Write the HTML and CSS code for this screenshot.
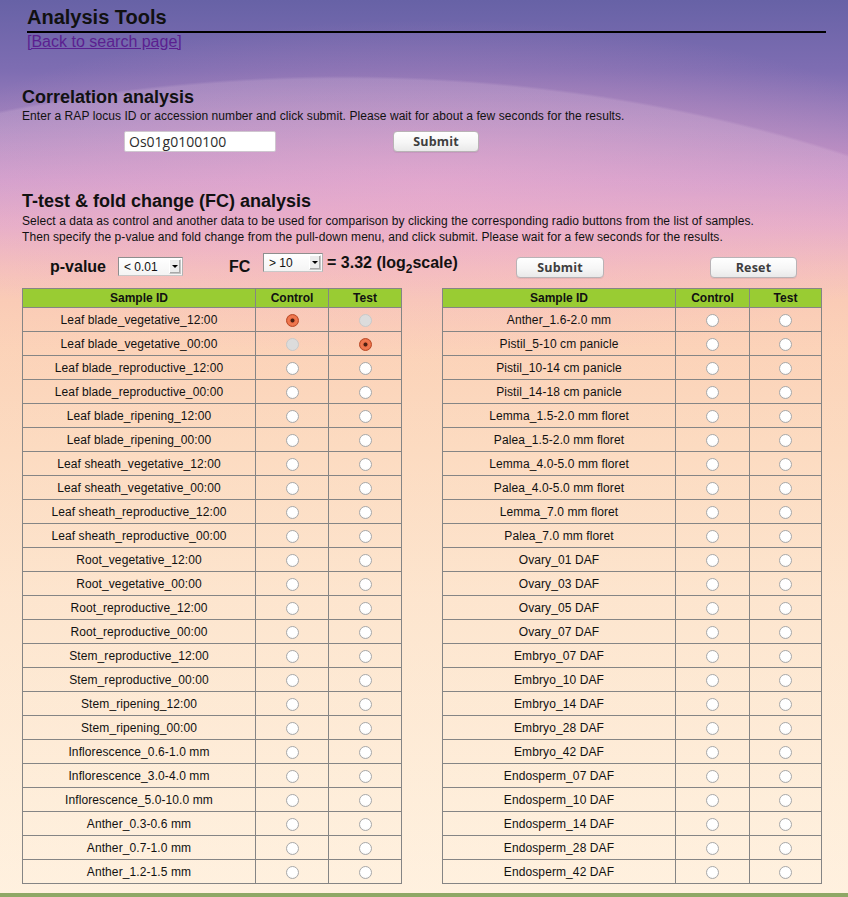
FILE: index.html
```html
<!DOCTYPE html>
<html lang="en">
<head>
<meta charset="utf-8">
<title>Analysis Tools</title>
<link rel="stylesheet" href="styles.css">
</head>
<body>
<div class="page">
  <header class="top">
    <h1 class="title">Analysis Tools</h1>
    <a class="back" href="#">[Back to search page]</a>
  </header>

  <section class="corr">
    <h2 class="sec-title">Correlation analysis</h2>
    <p class="desc">Enter a RAP locus ID or accession number and click submit. Please wait for about a few seconds for the results.</p>
    <form class="corr-form">
      <input class="locus" type="text" value="Os01g0100100">
      <button class="btn btn-corr" type="button">Submit</button>
    </form>
  </section>

  <section class="ttest">
    <h2 class="sec-title sec-ttest">T-test &amp; fold change (FC) analysis</h2>
    <p class="desc">Select a data as control and another data to be used for comparison by clicking the corresponding radio buttons from the list of samples.<br>Then specify the p-value and fold change from the pull-down menu, and click submit. Please wait for a few seconds for the results.</p>

    <div class="params">
      <span class="lbl lbl-p">p-value</span>
      <span class="sel sel-p"><select><option>&lt; 0.01</option></select><span class="arrow"></span></span>
      <span class="lbl lbl-fc">FC</span>
      <span class="sel sel-fc"><select><option>&gt; 10</option></select><span class="arrow"></span></span>
      <span class="log">= 3.32 (log<sub>2</sub>scale)</span>
      <button class="btn btn-submit" type="button">Submit</button>
      <button class="btn btn-reset" type="button">Reset</button>
    </div>

    <div class="tables">
      <table class="samples">
        <colgroup><col class="c-id"><col class="c-ctl"><col class="c-test"></colgroup>
        <thead><tr><th>Sample ID</th><th>Control</th><th>Test</th></tr></thead>
        <tbody>
          <tr><td>Leaf blade_vegetative_12:00</td><td><input type="radio" name="c" checked></td><td><input type="radio" name="t" disabled></td></tr>
          <tr><td>Leaf blade_vegetative_00:00</td><td><input type="radio" name="c" disabled></td><td><input type="radio" name="t" checked></td></tr>
          <tr><td>Leaf blade_reproductive_12:00</td><td><input type="radio" name="c"></td><td><input type="radio" name="t"></td></tr>
          <tr><td>Leaf blade_reproductive_00:00</td><td><input type="radio" name="c"></td><td><input type="radio" name="t"></td></tr>
          <tr><td>Leaf blade_ripening_12:00</td><td><input type="radio" name="c"></td><td><input type="radio" name="t"></td></tr>
          <tr><td>Leaf blade_ripening_00:00</td><td><input type="radio" name="c"></td><td><input type="radio" name="t"></td></tr>
          <tr><td>Leaf sheath_vegetative_12:00</td><td><input type="radio" name="c"></td><td><input type="radio" name="t"></td></tr>
          <tr><td>Leaf sheath_vegetative_00:00</td><td><input type="radio" name="c"></td><td><input type="radio" name="t"></td></tr>
          <tr><td>Leaf sheath_reproductive_12:00</td><td><input type="radio" name="c"></td><td><input type="radio" name="t"></td></tr>
          <tr><td>Leaf sheath_reproductive_00:00</td><td><input type="radio" name="c"></td><td><input type="radio" name="t"></td></tr>
          <tr><td>Root_vegetative_12:00</td><td><input type="radio" name="c"></td><td><input type="radio" name="t"></td></tr>
          <tr><td>Root_vegetative_00:00</td><td><input type="radio" name="c"></td><td><input type="radio" name="t"></td></tr>
          <tr><td>Root_reproductive_12:00</td><td><input type="radio" name="c"></td><td><input type="radio" name="t"></td></tr>
          <tr><td>Root_reproductive_00:00</td><td><input type="radio" name="c"></td><td><input type="radio" name="t"></td></tr>
          <tr><td>Stem_reproductive_12:00</td><td><input type="radio" name="c"></td><td><input type="radio" name="t"></td></tr>
          <tr><td>Stem_reproductive_00:00</td><td><input type="radio" name="c"></td><td><input type="radio" name="t"></td></tr>
          <tr><td>Stem_ripening_12:00</td><td><input type="radio" name="c"></td><td><input type="radio" name="t"></td></tr>
          <tr><td>Stem_ripening_00:00</td><td><input type="radio" name="c"></td><td><input type="radio" name="t"></td></tr>
          <tr><td>Inflorescence_0.6-1.0 mm</td><td><input type="radio" name="c"></td><td><input type="radio" name="t"></td></tr>
          <tr><td>Inflorescence_3.0-4.0 mm</td><td><input type="radio" name="c"></td><td><input type="radio" name="t"></td></tr>
          <tr><td>Inflorescence_5.0-10.0 mm</td><td><input type="radio" name="c"></td><td><input type="radio" name="t"></td></tr>
          <tr><td>Anther_0.3-0.6 mm</td><td><input type="radio" name="c"></td><td><input type="radio" name="t"></td></tr>
          <tr><td>Anther_0.7-1.0 mm</td><td><input type="radio" name="c"></td><td><input type="radio" name="t"></td></tr>
          <tr><td>Anther_1.2-1.5 mm</td><td><input type="radio" name="c"></td><td><input type="radio" name="t"></td></tr>
        </tbody>
      </table>

      <table class="samples samples-r">
        <colgroup><col class="c-id"><col class="c-ctl"><col class="c-test"></colgroup>
        <thead><tr><th>Sample ID</th><th>Control</th><th>Test</th></tr></thead>
        <tbody>
          <tr><td>Anther_1.6-2.0 mm</td><td><input type="radio" name="c"></td><td><input type="radio" name="t"></td></tr>
          <tr><td>Pistil_5-10 cm panicle</td><td><input type="radio" name="c"></td><td><input type="radio" name="t"></td></tr>
          <tr><td>Pistil_10-14 cm panicle</td><td><input type="radio" name="c"></td><td><input type="radio" name="t"></td></tr>
          <tr><td>Pistil_14-18 cm panicle</td><td><input type="radio" name="c"></td><td><input type="radio" name="t"></td></tr>
          <tr><td>Lemma_1.5-2.0 mm floret</td><td><input type="radio" name="c"></td><td><input type="radio" name="t"></td></tr>
          <tr><td>Palea_1.5-2.0 mm floret</td><td><input type="radio" name="c"></td><td><input type="radio" name="t"></td></tr>
          <tr><td>Lemma_4.0-5.0 mm floret</td><td><input type="radio" name="c"></td><td><input type="radio" name="t"></td></tr>
          <tr><td>Palea_4.0-5.0 mm floret</td><td><input type="radio" name="c"></td><td><input type="radio" name="t"></td></tr>
          <tr><td>Lemma_7.0 mm floret</td><td><input type="radio" name="c"></td><td><input type="radio" name="t"></td></tr>
          <tr><td>Palea_7.0 mm floret</td><td><input type="radio" name="c"></td><td><input type="radio" name="t"></td></tr>
          <tr><td>Ovary_01 DAF</td><td><input type="radio" name="c"></td><td><input type="radio" name="t"></td></tr>
          <tr><td>Ovary_03 DAF</td><td><input type="radio" name="c"></td><td><input type="radio" name="t"></td></tr>
          <tr><td>Ovary_05 DAF</td><td><input type="radio" name="c"></td><td><input type="radio" name="t"></td></tr>
          <tr><td>Ovary_07 DAF</td><td><input type="radio" name="c"></td><td><input type="radio" name="t"></td></tr>
          <tr><td>Embryo_07 DAF</td><td><input type="radio" name="c"></td><td><input type="radio" name="t"></td></tr>
          <tr><td>Embryo_10 DAF</td><td><input type="radio" name="c"></td><td><input type="radio" name="t"></td></tr>
          <tr><td>Embryo_14 DAF</td><td><input type="radio" name="c"></td><td><input type="radio" name="t"></td></tr>
          <tr><td>Embryo_28 DAF</td><td><input type="radio" name="c"></td><td><input type="radio" name="t"></td></tr>
          <tr><td>Embryo_42 DAF</td><td><input type="radio" name="c"></td><td><input type="radio" name="t"></td></tr>
          <tr><td>Endosperm_07 DAF</td><td><input type="radio" name="c"></td><td><input type="radio" name="t"></td></tr>
          <tr><td>Endosperm_10 DAF</td><td><input type="radio" name="c"></td><td><input type="radio" name="t"></td></tr>
          <tr><td>Endosperm_14 DAF</td><td><input type="radio" name="c"></td><td><input type="radio" name="t"></td></tr>
          <tr><td>Endosperm_28 DAF</td><td><input type="radio" name="c"></td><td><input type="radio" name="t"></td></tr>
          <tr><td>Endosperm_42 DAF</td><td><input type="radio" name="c"></td><td><input type="radio" name="t"></td></tr>
        </tbody>
      </table>
    </div>
  </section>
</div>
<div class="footer-bar"></div>
</body>
</html>
```

FILE: styles.css
```css
html {
  background-color: #fff4dc;
  background-image:
    radial-gradient(1100px 700px at 343px 776px, rgba(255, 225, 240, 0.16) 99.6%, rgba(255, 225, 240, 0) 100%),
    radial-gradient(540px 170px at 430px 190px, rgba(238, 165, 200, 0.5), rgba(238, 165, 200, 0) 100%),
    linear-gradient(180deg, #6762a6 0px, #7e6db2 70px, #a584be 130px, #c993c6 180px, #e2a5c0 225px, #f2b9b3 265px, #f9c7ab 300px, #fbd0ae 350px, #fcdab8 450px, #fde6c8 600px, #fef0d6 800px, #fff4dc 897px);
  background-repeat: no-repeat;
  min-height: 100%;
}

body {
  margin: 0;
  font-family: "Liberation Sans", Arial, sans-serif;
  color: #111;
}

.page {
  padding-left: 22px;
}

.top {
  margin-left: 5px;
  width: 799px;
}

.title {
  margin: 0;
  padding-top: 6px;
  padding-bottom: 2px;
  font-size: 20px;
  line-height: 23px;
  font-weight: bold;
  border-bottom: 2px solid #000;
}

.back {
  display: inline-block;
  font-size: 16px;
  line-height: 18px;
  color: #5b1f90;
  text-decoration: underline;
}

.sec-title {
  margin: 35px 0 0;
  font-size: 18px;
  line-height: 22px;
  font-weight: bold;
}

.sec-ttest {
  margin-top: 38px;
  line-height: 23px;
}

.desc {
  margin: 0;
  font-size: 12px;
  line-height: 16px;
  letter-spacing: 0.07px;
}

.corr-form {
  display: flex;
  margin: 7px 0 0;
  height: 21px;
}

.locus {
  box-sizing: border-box;
  margin: 0 0 0 102px;
  width: 152px;
  height: 21px;
  padding: 0 4px;
  border: 1px solid #cfc6cf;
  border-radius: 2px;
  background: #fff;
  font-family: "Open Sans", sans-serif;
  font-size: 14px;
  color: #2d2d2d;
  outline: none;
}

.btn {
  box-sizing: border-box;
  height: 21px;
  padding: 0;
  border: 1px solid #b9b3b6;
  border-radius: 4px;
  background: linear-gradient(180deg, #ffffff 0%, #f6f6f6 55%, #e9e9e9 100%);
  box-shadow: 0 1px 0 rgba(0, 0, 0, 0.06);
  font-family: "Open Sans", sans-serif;
  font-weight: bold;
  font-size: 12.5px;
  color: #3e3e3e;
  letter-spacing: 0.2px;
}

.btn-corr {
  margin-left: 117px;
  width: 86px;
}

.params {
  display: flex;
  align-items: flex-start;
  margin-top: 8px;
  height: 25px;
}

.lbl {
  flex: none;
  font-size: 16px;
  line-height: 19px;
  font-weight: bold;
  margin-top: 4px;
}

.lbl-p {
  margin-left: 28px;
  width: 68px;
}

.lbl-fc {
  margin-left: 46px;
  width: 34px;
}

.sel {
  position: relative;
  flex: none;
  box-sizing: border-box;
  height: 19px;
  border: 1px solid #8e8e8e;
  border-right-color: #b3b3b3;
  border-bottom-color: #c8c8c8;
  background: linear-gradient(180deg, #ffffff, #f4f4f4);
}

.sel select {
  appearance: none;
  -webkit-appearance: none;
  display: block;
  width: 100%;
  height: 17px;
  margin: 0;
  padding: 0 0 0 5px;
  border: 0;
  background: transparent;
  font-family: "Liberation Sans", Arial, sans-serif;
  font-size: 12px;
  color: #111;
  outline: none;
}

.sel .arrow {
  position: absolute;
  top: 1px;
  right: 1px;
  width: 10px;
  height: 13px;
  border: 1px solid #c4c4c4;
  border-left-color: #ffffff;
  border-top-color: #ffffff;
  background: #ececec;
  box-shadow: inset -1px -1px 0 #a8a8a8;
}

.sel .arrow::after {
  content: "";
  position: absolute;
  left: 2px;
  top: 5px;
  border-left: 3px solid transparent;
  border-right: 3px solid transparent;
  border-top: 3px solid #000;
}

.sel-p {
  width: 65px;
  margin-top: 4px;
}

.sel-fc {
  width: 60px;
  margin-top: 0;
}

.log {
  flex: none;
  width: 189px;
  margin-left: 4px;
  font-size: 16px;
  line-height: 19px;
  font-weight: bold;
}

.log sub {
  font-size: 12px;
  line-height: 0;
  vertical-align: -5px;
}

.btn-submit {
  flex: none;
  margin-top: 4px;
  width: 88px;
}

.btn-reset {
  flex: none;
  margin-top: 4px;
  margin-left: 106px;
  width: 87px;
}

.tables {
  display: flex;
  gap: 40px;
  margin-top: 10px;
}

.samples {
  width: 379px;
  border-collapse: collapse;
  border: 1px solid #858585;
  table-layout: fixed;
  font-size: 12px;
}

.c-id { width: 233px; }
.c-ctl { width: 73px; }
.c-test { width: 73px; }

.samples-r .c-ctl { width: 74px; }
.samples-r .c-test { width: 72px; }

.samples th {
  height: 18px;
  padding: 0;
  border: 1px solid #858585;
  background: #99cc33;
  font-weight: bold;
  line-height: 14px;
  text-align: center;
}

.samples td {
  height: 23px;
  padding: 0;
  border: 1px solid #858585;
  text-align: center;
  line-height: 14px;
  letter-spacing: 0.1px;
}

.samples input[type="radio"] {
  appearance: none;
  -webkit-appearance: none;
  box-sizing: border-box;
  display: inline-block;
  width: 13px;
  height: 13px;
  margin: 0;
  vertical-align: middle;
  border: 1px solid #a8a8a8;
  border-radius: 50%;
  background: radial-gradient(circle at 50% 40%, #ffffff 0%, #ffffff 55%, #efefef 100%);
}

.samples input[type="radio"]:checked {
  border-color: #b84a28;
  background: radial-gradient(circle, #4d2012 0, #4d2012 1.6px, #ee6e45 2.4px, #ef7a52 4px, #e1592f 100%);
}

.samples input[type="radio"]:disabled {
  border-color: #c9c9c9;
  background: #dcdcdc;
}

.footer-bar {
  margin-top: 9px;
  height: 20px;
  background: #8fa866;
}
```
